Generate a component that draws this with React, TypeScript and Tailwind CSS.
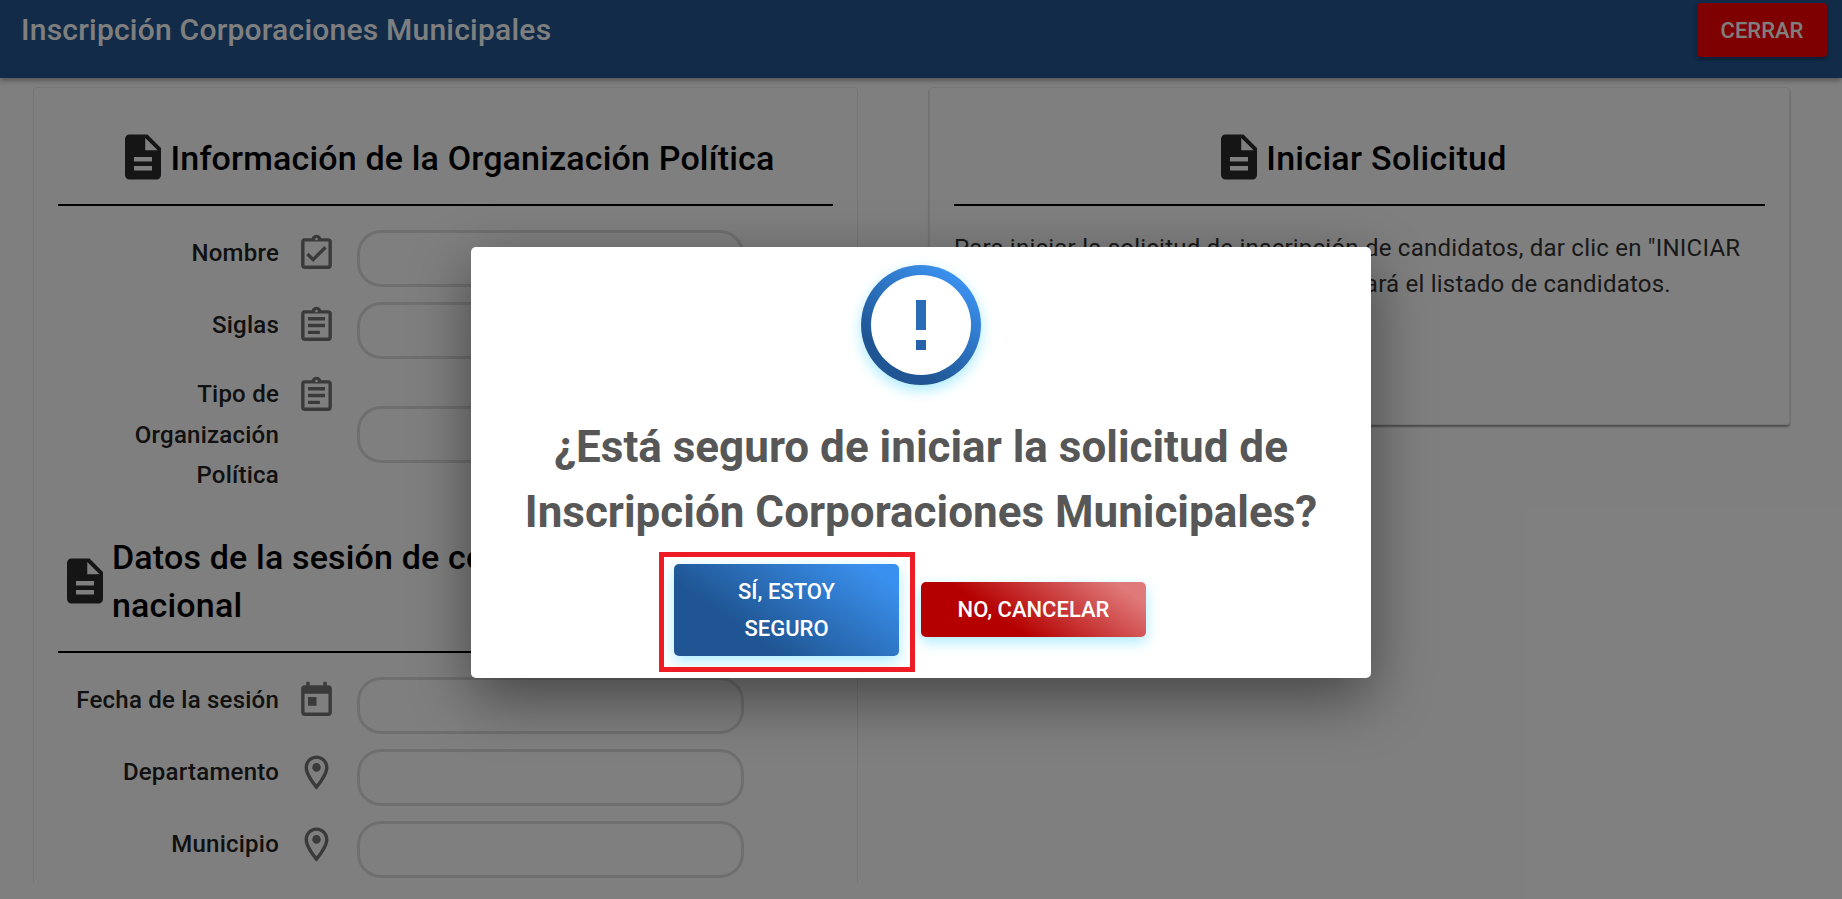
const docPath = "M14 2H6c-1.1 0-1.99.9-1.99 2L4 20c0 1.1.89 2 1.99 2H18c1.1 0 2-.9 2-2V8l-6-6zm2 16H8v-2h8v2zm0-4H8v-2h8v2zm-3-5V3.5L18.5 9H13z"
const icons = {
  check: "M18 9l-1.41-1.42L10 14.17l-2.59-2.58L6 13l4 4zm1-6h-4.18C14.4 1.84 13.3 1 12 1c-1.3 0-2.4.84-2.82 2H5c-.14 0-.27.01-.4.04-.39.08-.74.28-1.01.55-.18.18-.33.4-.43.64-.1.23-.16.49-.16.77v14c0 .27.06.54.16.78s.25.45.43.64c.27.27.62.47 1.01.55.13.02.26.03.4.03h14c1.1 0 2-.9 2-2V5c0-1.1-.9-2-2-2zm-7-.25c.41 0 .75.34.75.75s-.34.75-.75.75-.75-.34-.75-.75.34-.75.75-.75zM19 19H5V5h14v14z",
  clipboard: "M7 15h7v2H7zm0-4h10v2H7zm0-4h10v2H7zm12-4h-4.18C14.4 1.84 13.3 1 12 1c-1.3 0-2.4.84-2.82 2H5c-.14 0-.27.01-.4.04-.39.08-.74.28-1.01.55-.18.18-.33.4-.43.64-.1.23-.16.49-.16.77v14c0 .27.06.54.16.78s.25.45.43.64c.27.27.62.47 1.01.55.13.02.26.03.4.03h14c1.1 0 2-.9 2-2V5c0-1.1-.9-2-2-2zm-7-.25c.41 0 .75.34.75.75s-.34.75-.75.75-.75-.34-.75-.75.34-.75.75-.75zM19 19H5V5h14v14z",
  today: "M19 3h-1V1h-2v2H8V1H6v2H5c-1.11 0-1.99.9-1.99 2L3 19c0 1.1.89 2 2 2h14c1.1 0 2-.9 2-2V5c0-1.1-.9-2-2-2zm0 16H5V8h14v11zM7 10h5v5H7z",
  place: "M12 2C8.13 2 5 5.13 5 9c0 5.25 7 13 7 13s7-7.75 7-13c0-3.87-3.13-7-7-7zM7 9c0-2.76 2.24-5 5-5s5 2.24 5 5c0 2.88-2.88 7.19-5 9.88C9.92 16.21 7 11.85 7 9zm5-2.5a2.5 2.5 0 1 0 0 5 2.5 2.5 0 0 0 0-5z",
}

function DocIcon() {
  return (
    <svg viewBox="0 0 24 24" className="h-[54px] w-[54px] shrink-0 fill-[#2b2b2b]">
      <path d={docPath} />
    </svg>
  )
}

interface FieldProps {
  label: string
  icon: keyof typeof icons
  multiline?: boolean
}

function Field({ label, icon, multiline }: FieldProps) {
  return (
    <div className="mb-[15px] flex items-center">
      <div className={multiline ? "w-[221px] self-start text-right text-[24px] font-medium leading-[40.6px] tracking-[0.225px] text-[#222]" : "mt-[3px] w-[221px] self-start text-right text-[24px] font-medium leading-[40.6px] tracking-[0.225px] text-[#222]"}>
        {label}
      </div>
      <svg viewBox="0 0 24 24" className={multiline ? "ml-[17px] mt-[1px] h-[41px] w-[41px] shrink-0 self-start fill-[#757575]" : "ml-[17px] mt-[3px] h-[41px] w-[41px] shrink-0 self-start fill-[#757575]"}>
        <path d={icons[icon]} />
      </svg>
      <div className="ml-[20px] h-[57px] w-[387px] rounded-[24px] border-[3px] border-[#dedede] bg-white" />
    </div>
  )
}

export default function App() {
  return (
    <div className="relative h-[899px] w-[1842px] overflow-hidden bg-white font-['Roboto',sans-serif]">
      <header className="flex h-[78px] items-start justify-between bg-[#225792] pl-[21px] pr-[15px] shadow-[0_2px_6px_rgba(0,0,0,0.4)]">
        <h1 className="mt-[10px] text-[30px] font-medium leading-[40px] tracking-[0.225px] text-white">
          Inscripción Corporaciones Municipales
        </h1>
        <button className="mt-[3px] h-[54px] w-[130px] rounded bg-[#ff0000] text-[22px] font-medium uppercase text-white shadow-[0_2px_4px_rgba(0,0,0,0.4)]">
          Cerrar
        </button>
      </header>

      <main className="mt-[9px] flex h-[796px] items-start overflow-hidden pl-[33px]">
        <section className="h-[900px] w-[825px] rounded border border-[#ebebeb] px-[24px] pt-[42px]">
          <div className="flex h-[54px] items-start justify-center">
            <DocIcon />
            <h2 className="mt-[1px] text-[34px] font-medium leading-[54px] tracking-[0.17px] text-black">
              Información de la Organización Política
            </h2>
          </div>
          <hr className="mt-[20px] mb-[24px] border-t-2 border-black" />
          <Field label="Nombre" icon="check" />
          <Field label="Siglas" icon="clipboard" />
          <Field label="Tipo de Organización Política" icon="clipboard" multiline />

          <div className="mt-[37px] flex items-center">
            <DocIcon />
            <h2 className="max-w-[680px] text-[34px] font-medium leading-[48px] tracking-[0.17px] text-black">
              Datos de la sesión de comité ejecutivo nacional
            </h2>
          </div>
          <hr className="mt-[22px] mb-[24px] border-t-2 border-black" />
          <Field label="Fecha de la sesión" icon="today" />
          <Field label="Departamento" icon="place" />
          <Field label="Municipio" icon="place" />
        </section>

        <section className="ml-[71px] h-[338px] w-[861px] rounded border border-[#ebebeb] px-[24px] pt-[42px] shadow-[0_2px_2px_rgba(0,0,0,0.4)]">
          <div className="flex h-[54px] items-start justify-center">
            <DocIcon />
            <h2 className="mt-[1px] text-[34px] font-medium leading-[54px] tracking-[0.3px] text-black">Iniciar Solicitud</h2>
          </div>
          <hr className="mt-[20px] mb-[24px] border-t-2 border-black" />
          <p className="text-[24px] leading-[36px] tracking-[0.225px] text-[#333]">
            Para iniciar la solicitud de inscripción de candidatos, dar clic en "INICIAR SOLICITUD". A continuación: se mostrará el listado de candidatos.
          </p>
        </section>
      </main>

      {/* modal */}
      <div className="absolute inset-0 flex justify-center bg-black/50 pt-[247px]">
        <div className="h-[431px] w-[900px] rounded-[5px] bg-white pt-[18px] shadow-[0_20px_60px_rgba(0,0,0,0.45)]">
          <div className="mx-auto h-[120px] w-[120px] rounded-full bg-[linear-gradient(35deg,#1f5592_25%,#3a90ee_85%)] p-[10px] shadow-[0_5px_14px_#a8ebff]">
            <div className="flex h-full w-full flex-col items-center rounded-full bg-white pt-[25px]">
              <div className="h-[30px] w-[10px] bg-[#2b6cb8]" />
              <div className="mt-[10px] h-[10px] w-[10px] bg-[#2662aa]" />
            </div>
          </div>
          <h2 className="mt-[30px] text-center text-[44px] font-bold leading-[64.5px] text-[#575757]">
            ¿Está seguro de iniciar la solicitud de
            <br />
            Inscripción Corporaciones Municipales?
          </h2>
          <div className="mt-[20px] flex items-start justify-center gap-[22px] pr-[22px]">
            <div className="relative">
              <button className="block h-[92px] w-[225px] rounded-[5px] bg-[linear-gradient(35deg,#1f5592_30%,#3a90ee_90%)] px-[30px] text-[22px] font-medium uppercase leading-[37px] text-white shadow-[0_5px_14px_#a8ebff]">
                Sí, estoy seguro
              </button>
              <div className="absolute -left-[15px] -right-[16px] -top-[12px] -bottom-[16px] border-[5px] border-[#ee1c25]" />
            </div>
            <button className="mt-[18px] h-[55px] w-[225px] rounded-[5px] bg-[linear-gradient(35deg,#b50000_35%,#e07a7a_90%)] text-[22px] font-medium uppercase text-white shadow-[0_5px_14px_#a8ebff]">
              No, cancelar
            </button>
          </div>
        </div>
      </div>
    </div>
  )
}
